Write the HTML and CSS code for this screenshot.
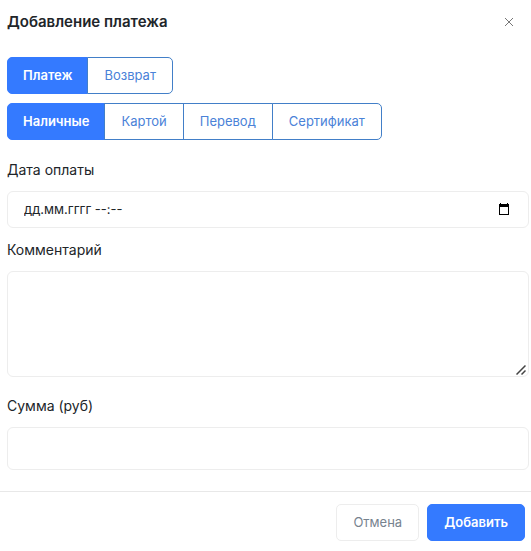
FILE: index.html
```html
<!DOCTYPE html>
<html lang="ru">
<head>
<meta charset="utf-8">
<meta name="viewport" content="width=device-width, initial-scale=1">
<title>Добавление платежа</title>
<link rel="stylesheet" href="styles.css">
</head>
<body>
<form class="modal">
  <header class="modal-header">
    <h1 class="modal-title">Добавление платежа</h1>
    <button class="close" type="button" aria-label="Закрыть">
      <svg width="10" height="10" viewBox="0 0 10 10" aria-hidden="true"><path d="M1 1l8 8M9 1l-8 8"/></svg>
    </button>
  </header>
  <div class="modal-body">
    <div class="switches">
      <div class="group" role="group" aria-label="Тип операции">
        <button class="option active" type="button">Платеж</button>
        <button class="option" type="button">Возврат</button>
      </div>
      <div class="group" role="group" aria-label="Способ оплаты">
        <button class="option active" type="button">Наличные</button>
        <button class="option" type="button">Картой</button>
        <button class="option" type="button">Перевод</button>
        <button class="option" type="button">Сертификат</button>
      </div>
    </div>
    <div class="field">
      <label for="date">Дата оплаты</label>
      <div class="control">
        <input class="input" id="date" type="text" placeholder="дд.мм.гггг --:--">
        <button class="picker" type="button" aria-label="Выбрать дату">
          <svg width="12" height="12" viewBox="0 0 12 12" aria-hidden="true"><path d="M2 0h1v1h6V0h1v1h1v11H1V1h1zM2 4v7h8V4z" fill-rule="evenodd"/></svg>
        </button>
      </div>
    </div>
    <div class="field">
      <label for="comment">Комментарий</label>
      <div class="control">
        <textarea class="input comment" id="comment"></textarea>
        <svg class="grip" width="10" height="10" viewBox="0 0 10 10" aria-hidden="true"><path d="M0.500 9.500l9-9M5.500 9.500l4-4"/></svg>
      </div>
    </div>
    <div class="field amount">
      <label for="sum">Сумма (руб)</label>
      <input class="input sum" id="sum" type="text">
    </div>
  </div>
  <footer class="modal-footer">
    <button class="button secondary" type="button">Отмена</button>
    <button class="button primary" type="submit">Добавить</button>
  </footer>
</form>
</body>
</html>
```
FILE: styles.css
```css
* {
  box-sizing: border-box;
}

body {
  margin: 0;
  background: #fff;
  color: #212529;
  font: 14px/20px Inter, "Liberation Sans", sans-serif;
}

button,
input,
textarea {
  font: inherit;
}

button {
  cursor: pointer;
}

.modal-header {
  display: flex;
  align-items: center;
  justify-content: space-between;
  padding: 12px 12px 25px 7px;
}

.modal-title {
  margin: 0;
  font-size: 15px;
  line-height: 20px;
  font-weight: 600;
}

.close {
  display: flex;
  padding: 5px;
  border: 0;
  background: none;
}

.close svg {
  fill: none;
  stroke: #777;
}

.modal-body {
  padding: 0 2px 21px 7px;
}

.switches {
  display: grid;
  justify-items: start;
  gap: 9px;
  margin-bottom: 20px;
}

.group {
  display: flex;
}

.option,
.button {
  padding: 8px 16px;
  border: 1px solid #427fc8;
  font-size: 13px;
  line-height: 19px;
  font-weight: 400;
}

.option {
  margin-left: -1px;
  background: #fff;
  color: #4a82d8;
}

.option:first-child {
  margin-left: 0;
  border-radius: 5px 0 0 5px;
}

.option:last-child {
  border-radius: 0 5px 5px 0;
}

.option.active {
  padding: 8px 15px;
  border-color: #347aff;
  background: #347aff;
  color: #fff;
  font-weight: 600;
}

.field {
  display: grid;
  gap: 11px;
  margin-bottom: 12px;
}

.field.amount {
  margin: 19px 0 0;
}

.control {
  display: grid;
  position: relative;
}

.input {
  width: 100%;
  padding: 8px 16px;
  border: 1px solid #ededed;
  border-radius: 6px;
  background: #fff;
  color: #212529;
  font-size: 13px;
  line-height: 19px;
}

.input::placeholder {
  color: #212529;
  opacity: 1;
}

.comment {
  height: 106px;
  resize: none;
}

.sum {
  height: 43px;
}

.picker {
  display: flex;
  position: absolute;
  top: 8px;
  right: 15px;
  padding: 4px;
  border: 0;
  background: none;
}

.grip {
  position: absolute;
  right: 3px;
  bottom: 2px;
  fill: none;
  stroke: #444;
  stroke-width: 1.5;
}

.modal-footer {
  display: flex;
  justify-content: flex-end;
  gap: 8px;
  padding: 12px 6px 9px;
  border-top: 1px solid #e8e8e8;
}

.button {
  border-radius: 5px;
}

.secondary {
  border-color: #ededed;
  background: #fff;
  color: #77838f;
}

.primary {
  border-color: #347aff;
  background: #347aff;
  color: #fff;
  font-weight: 600;
}
```
